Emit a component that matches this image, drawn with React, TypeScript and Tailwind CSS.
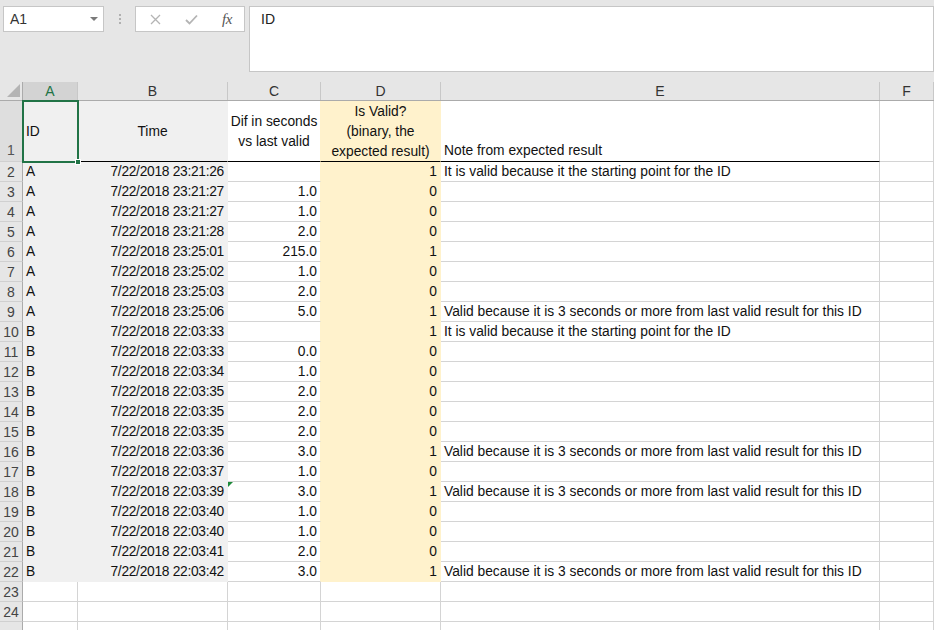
import React from 'react';

type Row = {
  n: number;
  a: string;
  b: string;
  c: string;
  d: string;
  e: string;
};

const VALID_START = 'It is valid because it the starting point for the ID';
const VALID_GAP = 'Valid because it is 3 seconds or more from last valid result for this ID';

const DATA: Row[] = [
  { n: 2, a: 'A', b: '7/22/2018 23:21:26', c: '', d: '1', e: VALID_START },
  { n: 3, a: 'A', b: '7/22/2018 23:21:27', c: '1.0', d: '0', e: '' },
  { n: 4, a: 'A', b: '7/22/2018 23:21:27', c: '1.0', d: '0', e: '' },
  { n: 5, a: 'A', b: '7/22/2018 23:21:28', c: '2.0', d: '0', e: '' },
  { n: 6, a: 'A', b: '7/22/2018 23:25:01', c: '215.0', d: '1', e: '' },
  { n: 7, a: 'A', b: '7/22/2018 23:25:02', c: '1.0', d: '0', e: '' },
  { n: 8, a: 'A', b: '7/22/2018 23:25:03', c: '2.0', d: '0', e: '' },
  { n: 9, a: 'A', b: '7/22/2018 23:25:06', c: '5.0', d: '1', e: VALID_GAP },
  { n: 10, a: 'B', b: '7/22/2018 22:03:33', c: '', d: '1', e: VALID_START },
  { n: 11, a: 'B', b: '7/22/2018 22:03:33', c: '0.0', d: '0', e: '' },
  { n: 12, a: 'B', b: '7/22/2018 22:03:34', c: '1.0', d: '0', e: '' },
  { n: 13, a: 'B', b: '7/22/2018 22:03:35', c: '2.0', d: '0', e: '' },
  { n: 14, a: 'B', b: '7/22/2018 22:03:35', c: '2.0', d: '0', e: '' },
  { n: 15, a: 'B', b: '7/22/2018 22:03:35', c: '2.0', d: '0', e: '' },
  { n: 16, a: 'B', b: '7/22/2018 22:03:36', c: '3.0', d: '1', e: VALID_GAP },
  { n: 17, a: 'B', b: '7/22/2018 22:03:37', c: '1.0', d: '0', e: '' },
  { n: 18, a: 'B', b: '7/22/2018 22:03:39', c: '3.0', d: '1', e: VALID_GAP },
  { n: 19, a: 'B', b: '7/22/2018 22:03:40', c: '1.0', d: '0', e: '' },
  { n: 20, a: 'B', b: '7/22/2018 22:03:40', c: '1.0', d: '0', e: '' },
  { n: 21, a: 'B', b: '7/22/2018 22:03:41', c: '2.0', d: '0', e: '' },
  { n: 22, a: 'B', b: '7/22/2018 22:03:42', c: '3.0', d: '1', e: VALID_GAP },
];

type Col = 'A' | 'B' | 'C' | 'D' | 'E' | 'F';

const WIDTH: Record<Col, string> = {
  A: 'w-[55px]',
  B: 'w-[150px]',
  C: 'w-[93px]',
  D: 'w-[120px]',
  E: 'w-[439px]',
  F: 'w-[54px]',
};

// background + gridline colours, filled cells hide their gridlines like Excel does
function cellColors(col: Col, row: number) {
  let bg = 'bg-white';
  let br = 'border-r-[#d4d4d4]';
  let bb = 'border-b-[#d4d4d4]';
  if ((col === 'A' || col === 'B') && row <= 22) {
    bg = 'bg-[#f0f0f0]';
    br = 'border-r-[#f0f0f0]';
    bb = 'border-b-[#f0f0f0]';
  }
  if (col === 'D' && row <= 22) {
    bg = 'bg-[#fff2cc]';
    br = 'border-r-[#fff2cc]';
    bb = 'border-b-[#fff2cc]';
  }
  if (col === 'C' && row <= 22) br = 'border-r-[#fff2cc]';
  if (row === 1 && col !== 'F') bb = 'border-b-black';
  return `${bg} ${br} ${bb}`;
}

const Cell: React.FC<{
  col: Col;
  row: number;
  align?: 'left' | 'right' | 'center';
  children?: React.ReactNode;
  extra?: string;
}> = ({ col, row, align = 'left', children, extra = '' }) => {
  const justify =
    align === 'right' ? 'justify-end pr-[3px]' : align === 'center' ? 'justify-center' : 'justify-start pl-[3px]';
  return (
    <div
      className={`${WIDTH[col]} ${cellColors(col, row)} h-full shrink-0 border-r border-b flex whitespace-nowrap ${justify} ${extra}`}
    >
      {children}
    </div>
  );
};

const RowHeader: React.FC<{ n: number; active?: boolean }> = ({ n, active }) => (
  <div
    className={`w-[23px] h-full shrink-0 flex justify-center border-r border-b border-r-[#ababab] border-b-[#d0d0d0] text-[14px] ${
      active ? 'bg-[#dedede] text-[#555] items-end pb-[1px]' : 'bg-[#e6e6e6] text-[#444] items-center pt-[1px]'
    }`}
  >
    {n}
  </div>
);

const FormulaBar: React.FC = () => (
  <div className="h-[82px] bg-[#e6e6e6] flex items-start pt-[6px] pl-[3px]">
    <div className="w-[101px] h-[26px] bg-white border border-[#c6c6c6] flex items-center pl-[6px] pr-[4px] justify-between">
      <span className="text-[14px] text-[#333]">A1</span>
      <div className="w-0 h-0 border-l-[4px] border-r-[4px] border-t-[4px] border-l-transparent border-r-transparent border-t-[#7a7a7a] mr-[1px]" />
    </div>
    <div className="w-[31px] h-[26px] flex flex-col items-center justify-center gap-[2px]">
      <div className="w-[2px] h-[2px] bg-[#b0b0b0]" />
      <div className="w-[2px] h-[2px] bg-[#b0b0b0]" />
      <div className="w-[2px] h-[2px] bg-[#b0b0b0]" />
    </div>
    <div className="w-[110px] h-[26px] bg-white border border-[#c6c6c6] flex items-center">
      <div className="w-[36px] flex justify-center pl-[2px]">
        <svg width="11" height="11" viewBox="0 0 11 11">
          <path d="M1 1 L10 10 M10 1 L1 10" stroke="#b4b4b4" strokeWidth="1.3" />
        </svg>
      </div>
      <div className="w-[38px] flex justify-center">
        <svg width="13" height="11" viewBox="0 0 13 11">
          <path d="M1 6 L4.5 9.5 L12 1.5" stroke="#b4b4b4" strokeWidth="1.8" fill="none" />
        </svg>
      </div>
      <div className="w-[34px] flex justify-center">
        <span className="italic text-[15px] text-[#555] font-['Liberation_Serif',serif] tracking-[-0.5px]">fx</span>
      </div>
    </div>
    <div className="flex-1 h-[66px] ml-[4px] bg-white border border-[#c6c6c6] pl-[11px] pt-[2px] text-[14px] text-[#222]">
      ID
    </div>
  </div>
);

const ColumnHeaders: React.FC = () => {
  const cols: Col[] = ['A', 'B', 'C', 'D', 'E', 'F'];
  return (
    <div className="flex h-[19px] border-b border-b-[#ababab] bg-[#e6e6e6]">
      <div className="w-[23px] h-full shrink-0 relative border-r border-r-[#ababab]">
        <svg className="absolute left-[7px] top-[2px]" width="13" height="13" viewBox="0 0 13 13">
          <polygon points="13,0 13,13 0,13" fill="#b4b4b4" />
        </svg>
      </div>
      {cols.map((c) => (
        <div
          key={c}
          className={`${WIDTH[c]} h-full shrink-0 flex items-center justify-center border-r border-r-[#c8c8c8] text-[14px] ${
            c === 'A' ? 'bg-[#d3d3d3] text-[#217346]' : 'text-[#333]'
          }`}
        >
          {c}
        </div>
      ))}
    </div>
  );
};

const App: React.FC = () => {
  return (
    <div className="w-[934px] h-[630px] overflow-hidden bg-white text-[#111] font-['Liberation_Sans',Arial,sans-serif] text-[13.8px] leading-[20px]">
      <FormulaBar />
      <ColumnHeaders />

      <div className="relative">
        {/* Row 1: header labels */}
        <div className="flex h-[61px]">
          <RowHeader n={1} active />
          <Cell col="A" row={1} extra="items-center pt-[1px]">ID</Cell>
          <Cell col="B" row={1} align="center" extra="items-center pt-[1px]">Time</Cell>
          <Cell col="C" row={1} align="center" extra="items-center text-center pt-[1px]">
            <div>
              Dif in seconds
              <br />
              vs last valid
            </div>
          </Cell>
          <Cell col="D" row={1} align="center" extra="items-center text-center pt-[1px]">
            <div>
              Is Valid?
              <br />
              (binary, the
              <br />
              expected result)
            </div>
          </Cell>
          <Cell col="E" row={1} extra="items-end">Note from expected result</Cell>
          <Cell col="F" row={1} />
        </div>

        {DATA.map((r) => (
          <div key={r.n} className="flex h-[20px]">
            <RowHeader n={r.n} />
            <Cell col="A" row={r.n} extra="items-center pt-[1px]">{r.a}</Cell>
            <Cell col="B" row={r.n} align="right" extra="items-center pt-[1px] tracking-[-0.3px]">{r.b}</Cell>
            <Cell col="C" row={r.n} align="right" extra="items-center pt-[1px] relative">
              {r.n === 18 && (
                <div className="absolute left-0 top-0 w-0 h-0 border-t-[5px] border-r-[5px] border-t-[#1e8a3a] border-r-transparent" />
              )}
              {r.c}
            </Cell>
            <Cell col="D" row={r.n} align="right" extra="items-center pt-[1px]">{r.d}</Cell>
            <Cell col="E" row={r.n} extra="items-center pt-[1px]">{r.e}</Cell>
            <Cell col="F" row={r.n} />
          </div>
        ))}

        {[23, 24].map((n) => (
          <div key={n} className="flex h-[20px]">
            <RowHeader n={n} />
            <Cell col="A" row={n} />
            <Cell col="B" row={n} />
            <Cell col="C" row={n} />
            <Cell col="D" row={n} />
            <Cell col="E" row={n} />
            <Cell col="F" row={n} />
          </div>
        ))}
        <div className="flex h-[20px]">
          <div className="w-[23px] h-full shrink-0 border-r border-r-[#ababab] bg-[#e6e6e6]" />
          <Cell col="A" row={25} />
          <Cell col="B" row={25} />
          <Cell col="C" row={25} />
          <Cell col="D" row={25} />
          <Cell col="E" row={25} />
          <Cell col="F" row={25} />
        </div>

        {/* active cell A1 */}
        <div className="absolute left-[22px] top-[-1px] w-[57px] h-[63px] border-2 border-[#217346] pointer-events-none" />
        <div className="absolute left-[75px] top-[58px] w-[6px] h-[6px] bg-[#217346] border border-white pointer-events-none" />
      </div>
    </div>
  );
};

export default App;
